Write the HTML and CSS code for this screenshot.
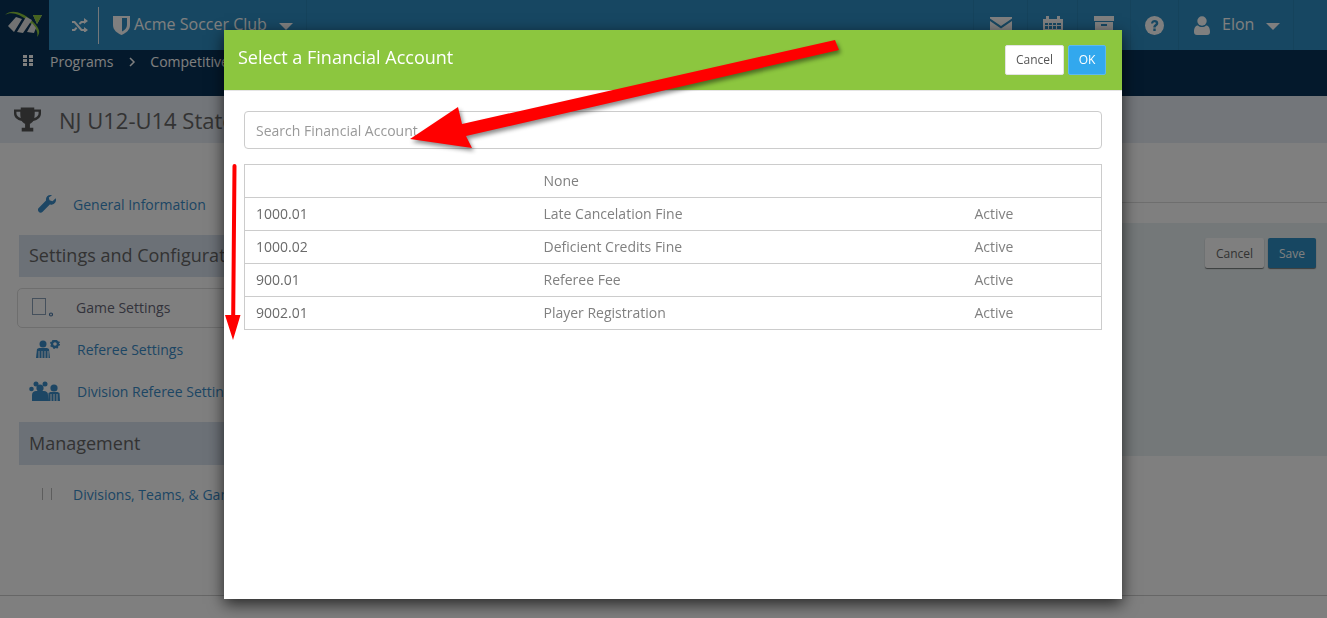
FILE: index.html
```html
<!DOCTYPE html>
<html lang="en">
<head>
<meta charset="utf-8">
<title>Select a Financial Account</title>
<link rel="stylesheet" href="styles.css">
</head>
<body>
<div class="page">
  <header class="topbar">
    <div class="logo">
      <svg width="49" height="50" viewBox="0 0 49 50"><path d="M5 15C11 9 22 12 31 20c7 6 11 12 6 17 2-6-3-11-9-16C20 14 11 11 5 15z" fill="#8cc63f"/><path d="M8 26l8-9 6 2-8 13zM17 32l9-15 6 3-9 13zM27 32l5-9 4 5-2 5zM33 15h9l-5 9z" fill="#e4e4e4"/><path d="M33 15h9l-5 9z" fill="#8cc63f"/></svg>
    </div>
    <div class="club">
      <svg class="ic-shuffle" width="16" height="14" viewBox="0 0 16 14"><path d="M0 3h3l7 8h2V9l4 3-4 3v-2h-3L2 5H0zM0 11h2l2-2 1.300 1.500L3 13H0zM9 3h3V0l4 3-4 3V5h-2L8 6.800 6.700 5.300z" fill="#fff"/></svg>
      <span class="vline"></span>
      <svg class="ic-shield" width="17" height="20" viewBox="0 0 17 20"><path d="M0 1h17v9c0 5-4 8-8.500 10C4 18 0 15 0 10z" fill="#fff"/><path d="M9 3h5v7c0 3-2 5-5 6.500z" fill="#2e8fc4"/></svg>
      <span class="clubname">Acme Soccer Club</span>
      <span class="caret"></span>
    </div>
    <nav class="tools">
      <div class="tool"><svg width="22" height="16" viewBox="0 0 22 16"><path d="M0 0h22v1.500L11 9 0 1.500zM0 4l11 7.500L22 4v12H0z" fill="#fff"/></svg></div>
      <div class="tool"><svg width="20" height="21" viewBox="0 0 20 21"><path fill-rule="evenodd" d="M0 4h3V1h3v3h8V1h3v3h3v17H0zM2 8v2h3V8zm4 0v2h3V8zm4 0v2h3V8zm4 0v2h4V8zM2 11v3h3v-3zm4 0v3h3v-3zm4 0v3h3v-3zm4 0v3h4v-3zM2 15v4h3v-4zm4 0v4h3v-4zm4 0v4h3v-4zm4 0v4h4v-4z" fill="#fff"/></svg></div>
      <div class="tool"><svg width="20" height="18" viewBox="0 0 20 18"><path fill-rule="evenodd" d="M0 0h20v5H0zM1 6h18v12H1zM7 8v2h6V8z" fill="#fff"/></svg></div>
      <div class="tool"><svg width="19" height="19" viewBox="0 0 19 19"><circle cx="9.500" cy="9.500" r="9.500" fill="#fff"/><path d="M6 7.500C6 5 8 4 9.700 4c2 0 3.600 1.200 3.600 3.200 0 2.600-2.600 2.700-2.600 4.300H8.300c0-2.800 2.500-3 2.500-4.200 0-.7-.5-1.100-1.200-1.100-.8 0-1.300.5-1.500 1.300zM8.300 12.500h2.400V15H8.300z" fill="#2e8fc4"/></svg></div>
      <div class="tool user"><svg width="16" height="19" viewBox="0 0 16 19"><circle cx="8" cy="5" r="4.700" fill="#fff"/><path d="M0 16c0-5 2-6.500 4-6.500 1 1 2.500 1.500 4 1.500s3-.5 4-1.500c2 0 4 1.500 4 6.500 0 2-1 3-3 3H3c-2 0-3-1-3-3z" fill="#fff"/></svg><span class="username">Elon</span><span class="caret"></span></div>
    </nav>
  </header>

  <div class="subnav">
    <svg class="ic-grid" width="10" height="11" viewBox="0 0 10 11"><path d="M0 0h4v3H0zM6 0h4v3H6zM0 4h4v3H0zM6 4h4v3H6zM0 8h4v3H0zM6 8h4v3H6z" fill="#fff"/></svg>
    <span>Programs</span>
    <svg class="ic-chev" width="7" height="10" viewBox="0 0 7 10"><path d="M1 1l4 4-4 4" fill="none" stroke="#fff" stroke-width="1.500"/></svg>
    <span>Competitive</span>
  </div>

  <div class="titlebar">
    <svg width="27" height="25" viewBox="0 0 28 25"><path fill-rule="evenodd" d="M7 0h14v2h7v4c0 4-3 7-8 8-1 1.500-2.500 2.500-3.500 3v4H20v4H8v-4h3.500v-4c-1-.5-2.500-1.500-3.500-3-5-1-8-4-8-8V2h7zM2.500 4.500V6c0 2 1.500 4 4.500 5-.5-2-.5-4.500-.5-6.500zm23 0h-4c0 2 0 4.500-.5 6.500 3-1 4.500-3 4.500-5z" fill="#555"/></svg>
    <h1>NJ U12-U14 State Cup</h1>
  </div>

  <div class="content">
    <aside class="sidebar">
      <a class="item general"><svg width="18" height="18" viewBox="0 0 18 18"><path d="M12.500 0c-3 0-5 2.500-4.500 5.500L.7 13c-1 1-1 2.500 0 3.700 1 1.200 2.700 1.200 3.700.2L11.800 9.600C15 10.300 18 8 18 5c0-.7-.1-1.200-.3-1.700l-3.200 3-3-1-.7-2.800L14 .2C13.500.1 13 0 12.500 0z" fill="#3a8cc8"/></svg><span>General Information</span></a>
      <h2 class="section">Settings and Configuration</h2>
      <a class="item current"><svg width="22" height="19" viewBox="0 0 22 19"><rect x=".5" y=".5" width="13" height="16" fill="none" stroke="#8aa0b8"/><circle cx="19" cy="16.500" r="1.500" fill="none" stroke="#4a78a8" stroke-width="1.200"/></svg><span>Game Settings</span></a>
      <a class="item ref"><svg width="24" height="18" viewBox="0 0 24 18"><circle cx="7" cy="4" r="3.500" fill="#3a8cc8"/><path d="M0 18l1-9 2-1h8l2 1 1 9z" fill="#3a8cc8"/><path d="M3 11v7M6 11v7M9 11v7M12 11v7" stroke="#fff" stroke-width="1"/><circle cx="19" cy="4" r="3" fill="none" stroke="#3a8cc8" stroke-width="2.400"/><circle cx="19" cy="4" r="4.300" fill="none" stroke="#3a8cc8" stroke-width="1.400" stroke-dasharray="1.600 1.800"/></svg><span>Referee Settings</span></a>
      <a class="item ref"><svg class="wide" width="32" height="20" viewBox="0 0 32 20"><circle cx="7" cy="3" r="2.500" fill="#3a8cc8"/><circle cx="16" cy="3" r="2.500" fill="#3a8cc8"/><circle cx="2.500" cy="8" r="2.300" fill="#3a8cc8"/><circle cx="11" cy="7" r="3.600" fill="#3a8cc8"/><path d="M3 20v-6c0-3 2-4 4-4h8c2 0 4 1 4 4v6z" fill="#3a8cc8"/><circle cx="25" cy="7" r="3.600" fill="#3a8cc8"/><path d="M19 20l.5-8 2-1h7l2 1 .5 8z" fill="#3a8cc8"/><path d="M22 13v7M25 13v7M28 13v7" stroke="#fff"/></svg><span>Division Referee Settings</span></a>
      <h2 class="section second">Management</h2>
      <a class="item divisions"><span class="bars"><i></i><i></i></span><span>Divisions, Teams, &amp; Games</span></a>
    </aside>
    <section class="panel">
      <div class="tabline"></div>
      <div class="tinted">
        <button class="btn plain">Cancel</button>
        <button class="btn save">Save</button>
      </div>
    </section>
  </div>
  <footer class="footer"></footer>
</div>

<div class="backdrop"></div>

<div class="modal">
  <div class="modal-head">
    <h3>Select a Financial Account</h3>
    <div class="modal-actions">
      <button class="mbtn cancel">Cancel</button>
      <button class="mbtn ok">OK</button>
    </div>
  </div>
  <div class="modal-body">
    <input class="search" type="text" placeholder="Search Financial Account">
    <table class="accounts">
      <tr><td></td><td>None</td><td></td></tr>
      <tr><td>1000.01</td><td>Late Cancelation Fine</td><td>Active</td></tr>
      <tr><td>1000.02</td><td>Deficient Credits Fine</td><td>Active</td></tr>
      <tr><td>900.01</td><td>Referee Fee</td><td>Active</td></tr>
      <tr><td>9002.01</td><td>Player Registration</td><td>Active</td></tr>
    </table>
  </div>
</div>

<svg class="arrows" width="1327" height="618" viewBox="0 0 1327 618">
  <polygon class="big" points="835,40 839,50 466,136 472,148 410,139 458,107 462,124" />
  <path d="M232.500 166a2 2 0 0 1 4 0L235.200 315H240.500L233 340 225 315H231.200z" fill="#ff0000"/>
</svg>
</body>
</html>
```
FILE: styles.css
```css
* { box-sizing: border-box; }
html, body { margin: 0; height: 100%; overflow: hidden; }
body { font-family: "Open Sans", "Noto Sans", sans-serif; background: #fff; color: #666; }
.page { height: 618px; display: flex; flex-direction: column; }

.topbar { height: 50px; background: #2e8fc4; display: flex; align-items: stretch; color: #fff; flex: none; }
.logo { width: 49px; background: #083358; display: flex; align-items: center; justify-content: center; }
.club { width: 258px; border-right: 1px solid #2b86b8; display: flex; align-items: center; padding-left: 23px; }
.ic-shuffle { margin-right: 10px; }
.vline { width: 1px; height: 37px; background: #e6eef4; margin-right: 14px; }
.clubname { font-size: 16px; margin-left: 4px; margin-right: 12px; padding-bottom: 2px; }
.caret { width: 0; height: 0; border-left: 7px solid transparent; border-right: 7px solid transparent; border-top: 7px solid #fff; margin-top: 3px; }
.tools { margin-left: auto; display: flex; margin-right: 33px; }
.tool { border-left: 1px solid #2b86b8; display: flex; align-items: center; justify-content: center; }
.tool:nth-child(1) { width: 54px; }
.tool:nth-child(2) { width: 50px; }
.tool:nth-child(3) { width: 53px; }
.tool:nth-child(4) { width: 48px; }
.tool.user { width: 116px; border-right: 1px solid #2b86b8; justify-content: flex-start; padding-left: 15px; }
.username { font-size: 16px; margin: 0 12px; padding-bottom: 2px; }

.subnav { height: 46px; background: #083358; flex: none; display: flex; align-items: flex-start; padding: 2px 0 0 23px; color: #fff; font-size: 14px; line-height: 19px; }
.ic-grid { margin: 3px 17px 0 0; }
.ic-chev { margin: 5px 14px 0 16px; }

.titlebar { height: 47px; background: #e6ecf4; flex: none; display: flex; align-items: center; padding-left: 14px; gap: 18px; }
.titlebar h1 { font-size: 22px; font-weight: 400; margin: 0; color: #666; white-space: nowrap; }

.content { flex: 1; display: flex; min-height: 0; }
.sidebar { width: 241px; margin-left: 17px; padding-top: 43px; flex: none; display: flex; flex-direction: column; }
.item { display: flex; align-items: center; color: #3a8cc8; font-size: 14px; height: 42px; white-space: nowrap; }
.general { height: 36px; margin-bottom: 2px; padding-left: 21px; gap: 17px; }
.section { font-size: 18px; font-weight: 400; margin: 11px 0 11px 2px; height: 42px; line-height: 41px; padding-left: 10px; background: #d8e2ee; color: #666; white-space: nowrap; }
.current { border: 1px solid #ddd; border-radius: 5px; padding: 0 0 2px 14px; gap: 22px; height: 40px; color: #667; }
.ref { padding-left: 19px; gap: 17px; }
.ref .wide { margin-left: -7px; margin-right: -1px; }
.second { margin-top: 10px; margin-bottom: 8px; height: 43px; line-height: 43px; }
.divisions { padding-left: 25px; gap: 21px; }
.bars { display: flex; gap: 8px; }
.bars i { width: 1px; height: 12px; background: #bbb; }

.panel { flex: 1; display: flex; flex-direction: column; padding-top: 59px; }
.tabline { height: 1px; background: #ddd; }
.tinted { margin-top: 20px; height: 233px; background: #e8f0f2; display: flex; justify-content: flex-end; align-items: flex-start; gap: 4px; padding: 15px 11px 0 0; }
.btn { height: 30px; font: 12px "Open Sans", sans-serif; border: 0; border-radius: 2px; box-shadow: 0 1px 1px rgba(0,0,0,.5); padding: 0; }
.btn.plain { width: 59px; background: #fff; color: #666; }
.btn.save { width: 48px; background: #2e8fc4; color: #fff; }
.footer { height: 23px; border-top: 1px solid #ccc; flex: none; }

.backdrop { position: fixed; inset: 0; background: rgba(0,0,0,.5); }

.modal { position: absolute; left: 224px; top: 30px; width: 898px; height: 569px; background: #fff; box-shadow: 0 5px 15px rgba(0,0,0,.7); }
.modal-head { height: 61px; background: #8cc63f; border-bottom: 1px solid #e5e5e5; display: flex; align-items: flex-start; justify-content: space-between; padding: 15px 16px 0 14px; }
.modal-head h3 { margin: 0; font-size: 18px; font-weight: 400; line-height: 25px; color: #fff; }
.modal-actions { display: flex; gap: 4px; }
.mbtn { height: 30px; font: 12px "Open Sans", sans-serif; border: 1px solid #e3e3e3; border-radius: 2px; padding: 0 0 2px; }
.mbtn.cancel { width: 59px; background: #fff; color: #555; }
.mbtn.ok { width: 38px; background: #32a8ee; border-color: #5cb8f0; color: #fff; }
.modal-body { padding: 20px 20px 0; }
.search { display: block; width: 100%; height: 38px; border: 1px solid #ccc; border-radius: 4px; padding: 0 11px; font: 14px "Open Sans", sans-serif; color: #555; }
.search::placeholder { color: #999; opacity: 1; }
.accounts { width: 100%; margin-top: 15px; border-collapse: collapse; table-layout: fixed; font-size: 14px; color: #808080; }
.accounts tr { border: 1px solid #ccc; height: 33px; }
.accounts td { padding: 0 0 2px 11px; }
.accounts td:nth-child(1) { width: 288px; color: #6a6a6a; }
.accounts td:nth-child(3) { width: 138px; }

.arrows { position: absolute; left: 0; top: 0; pointer-events: none; }
.big { fill: #ff0000; filter: drop-shadow(2px 3px 2px rgba(0,0,0,.45)); }
```
